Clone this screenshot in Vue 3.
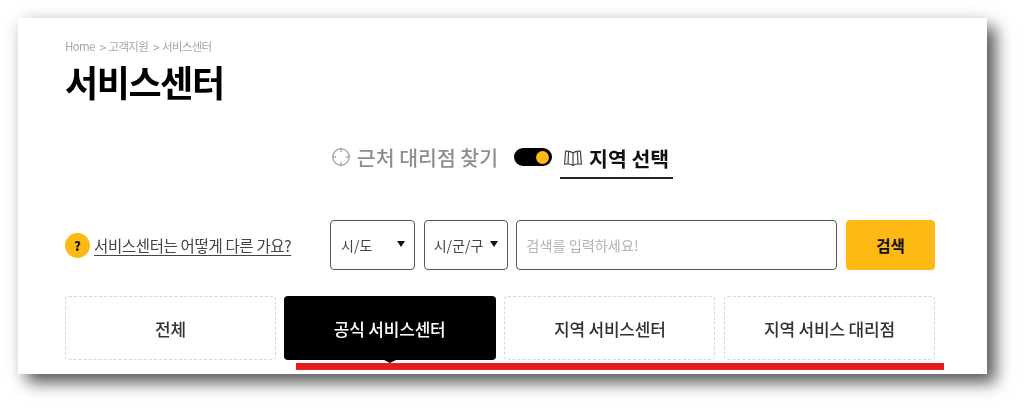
<script setup>
const tabs = [
  { label: '전체', active: false },
  { label: '공식 서비스센터', active: true },
  { label: '지역 서비스센터', active: false },
  { label: '지역 서비스 대리점', active: false },
]
const selects = [
  { label: '시/도', cls: 'sido' },
  { label: '시/군/구', cls: 'sigungu' },
]
</script>

<template>
  <div class="page">
    <main class="card">
      <nav class="crumbs">
        <span>Home</span><span class="sep">&gt;</span><span>고객지원</span><span class="sep">&gt;</span><span>서비스센터</span>
      </nav>
      <h1 class="title">서비스센터</h1>

      <div class="mode">
        <div class="mode-near">
          <svg class="target" width="20" height="20" viewBox="0 0 20 20" fill="none" stroke="#a9a9a9" stroke-width="1.4">
            <circle cx="10" cy="10" r="8.2" />
            <path d="M10 0.8v4.4M10 14.8v4.4M0.8 10h4.4M14.8 10h4.4" />
          </svg>
          <span>근처 대리점 찾기</span>
        </div>
        <div class="switch"><span class="knob"></span></div>
        <div class="mode-region">
          <svg width="20" height="18" viewBox="0 0 20 18" fill="none" stroke="#444" stroke-width="1.2" stroke-linejoin="round">
            <path d="M10 4.2C8.6 2.6 5.8 2 2.6 2.2L1.6 15.2C5 14.8 8 15 10 16.4C12 15 15 14.8 18.4 15.2L17.4 2.2C14.2 2 11.4 2.6 10 4.2Z" />
            <path d="M10 4.2V16.4M5.6 2.4L5 14.9M14.4 2.4L15 14.9" />
          </svg>
          <span>지역 선택</span>
        </div>
      </div>

      <div class="search">
        <a class="help">
          <span class="help-badge">?</span>
          <span class="help-text">서비스센터는 어떻게 다른 가요?</span>
        </a>
        <div v-for="s in selects" :key="s.label" class="select" :class="s.cls">
          <span>{{ s.label }}</span>
          <i class="caret"></i>
        </div>
        <input class="input" type="text" placeholder="검색를 입력하세요!" />
        <button class="submit" type="button">검색</button>
      </div>

      <div class="tabs">
        <div v-for="t in tabs" :key="t.label" class="tab" :class="{ active: t.active }">{{ t.label }}</div>
        <div class="redline"></div>
      </div>
    </main>
  </div>
</template>

<style scoped>
.page {
  width: 1024px;
  height: 411px;
  padding: 18px 37px 37px 18px;
  box-sizing: border-box;
  overflow: hidden;
  background: #fff;
  font-family: "Noto Sans CJK KR", "Noto Sans", sans-serif;
}
.card {
  position: relative;
  height: 356px;
  box-sizing: border-box;
  padding: 20px 52px 0 47px;
  background: #fff;
  box-shadow: 9px 9px 15px rgba(0, 0, 0, 0.62), 0 0 18px rgba(0, 0, 0, 0.1);
  filter: blur(0.5px);
}
.crumbs {
  display: flex;
  align-items: center;
  height: 16px;
  font-size: 11.5px;
  letter-spacing: -0.7px;
  color: #a6a6a6;
}
.sep { margin: 0 3px 0 5px; font-size: 12px; }
.title {
  margin: 4px 0 0;
  height: 46px;
  font-size: 36px;
  line-height: 46px;
  font-weight: 700;
  letter-spacing: -1.4px;
  color: #000;
}
.mode {
  display: flex;
  align-items: center;
  justify-content: center;
  height: 40px;
  margin: 33px 0 0;
  padding-left: 4px;
  font-size: 20.5px;
  font-weight: 500;
}
.mode-near {
  display: flex;
  align-items: center;
  gap: 6px;
  color: #8f8f8f;
}
.switch {
  width: 38px;
  height: 18px;
  margin: 0 8px 0 16px;
  display: flex;
  align-items: center;
  justify-content: flex-end;
  padding-right: 3px;
  box-sizing: border-box;
  border-radius: 9px;
  background: #000;
}
.knob {
  width: 13px;
  height: 13px;
  border-radius: 50%;
  background: #ffb915;
}
.mode-region {
  display: flex;
  align-items: center;
  gap: 6px;
  height: 40px;
  padding: 0 4px 0 3px;
  color: #111;
  font-weight: 700;
  border-bottom: 2px solid #222;
  box-sizing: border-box;
  margin-top: 4px;
}
.search {
  display: flex;
  align-items: center;
  gap: 8.67px;
  height: 50px;
  margin-top: 43px;
}
.help {
  display: flex;
  align-items: center;
  gap: 4px;
  margin-right: auto;
}
.help-badge {
  width: 25px;
  height: 25px;
  border-radius: 50%;
  background: #ffb915;
  color: #111;
  font-size: 13px;
  font-weight: 900;
  line-height: 25px;
  text-align: center;
}
.help-text {
  font-size: 15.5px;
  letter-spacing: -0.35px;
  color: #444;
  text-decoration: underline;
  text-underline-offset: 3px;
}
.select {
  display: flex;
  align-items: center;
  justify-content: space-between;
  height: 50px;
  box-sizing: border-box;
  border: 1.5px solid #555;
  border-radius: 4px;
  font-size: 14px;
  color: #444;
}
.sido { width: 85px; padding: 0 9px 0 10px; }
.sigungu { width: 84px; padding: 0 9px 0 9px; }
.caret {
  width: 0;
  height: 0;
  margin-bottom: 2px;
  border-left: 4px solid transparent;
  border-right: 4px solid transparent;
  border-top: 6px solid #111;
}
.input {
  width: 321px;
  height: 50px;
  box-sizing: border-box;
  padding: 0 9px;
  border: 1.5px solid #555;
  border-radius: 4px;
  background: #fff;
  font-family: inherit;
  font-size: 14.2px;
  outline: none;
}
.input::placeholder { color: #b4b4b4; opacity: 1; }
.submit {
  width: 89px;
  height: 50px;
  border: 0;
  border-radius: 4px;
  background: #ffb915;
  color: #111;
  font-family: inherit;
  font-size: 15.5px;
  font-weight: 700;
}
.tabs {
  position: relative;
  display: grid;
  grid-template-columns: repeat(4, 1fr);
  column-gap: 8.6px;
  height: 64px;
  margin-top: 26px;
}
.tab {
  position: relative;
  display: flex;
  align-items: center;
  justify-content: center;
  box-sizing: border-box;
  border: 1px dashed #d8d8d8;
  border-radius: 4px;
  font-size: 17px;
  font-weight: 500;
  letter-spacing: -0.2px;
  color: #333;
}
.tab.active {
  border: 0;
  margin-left: -1px;
  background: #000;
  color: #fff;
}
.tab.active::after {
  content: "";
  position: absolute;
  left: 50%;
  bottom: -3px;
  margin-left: -6px;
  border-left: 6px solid transparent;
  border-right: 6px solid transparent;
  border-top: 3px solid #000;
}
.redline {
  position: absolute;
  left: 231px;
  right: -9px;
  top: 67px;
  height: 7px;
  background: #e81c1c;
}
</style>
